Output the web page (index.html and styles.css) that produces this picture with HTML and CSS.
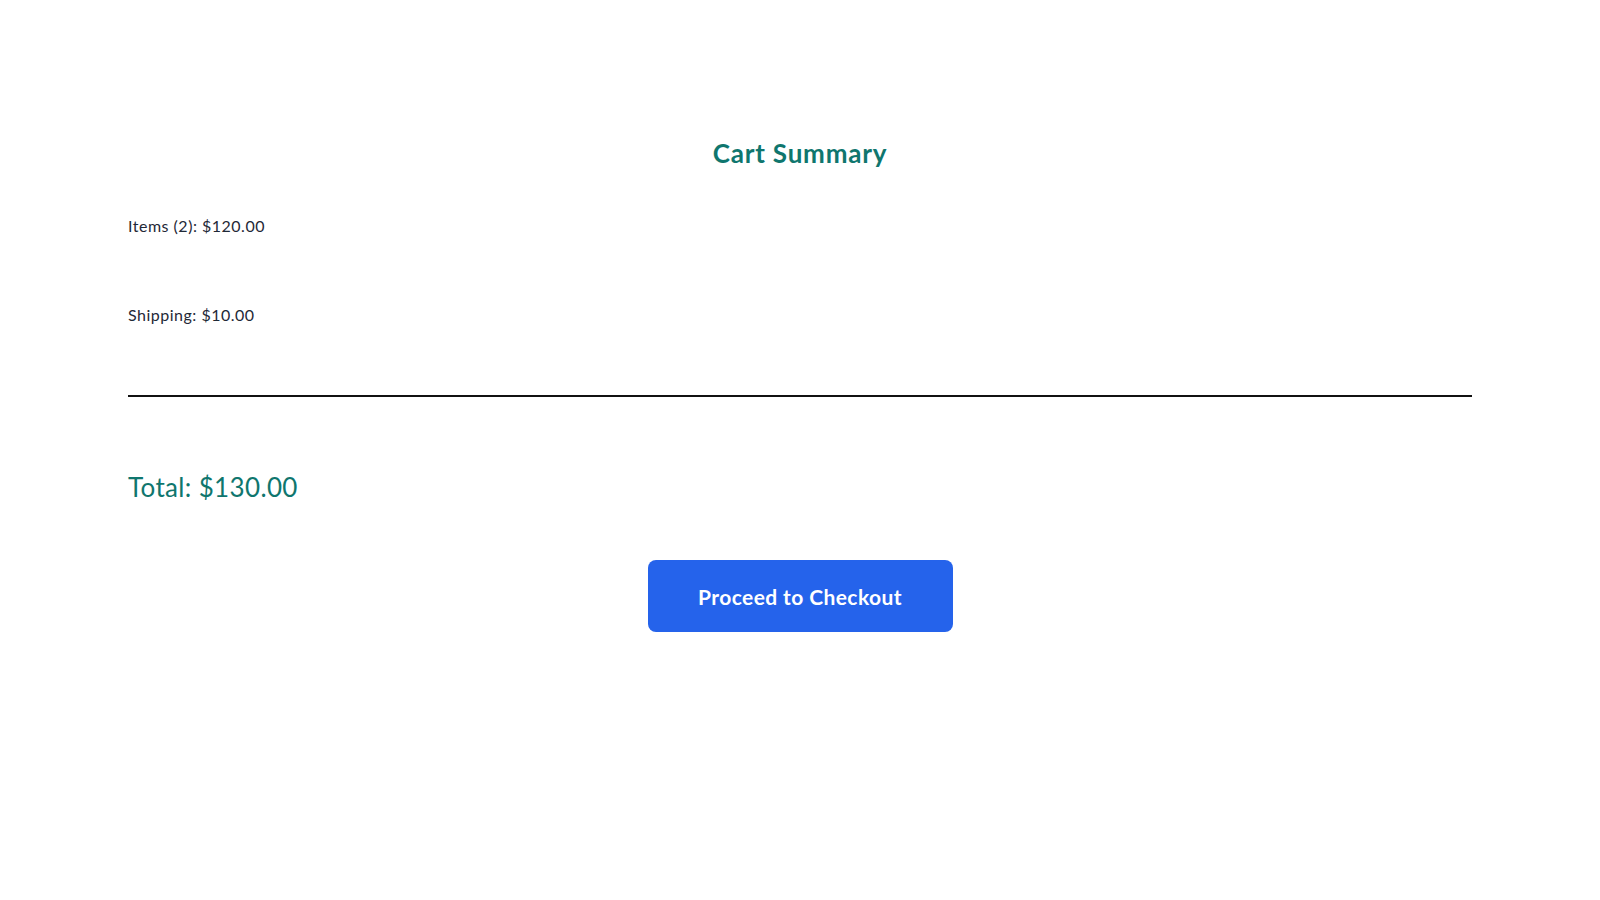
FILE: index.html
```
<!DOCTYPE html>
<html lang="en">
<head>
<meta charset="utf-8" />
<title>Cart Summary</title>
<link rel="stylesheet" href="styles.css">
</head>
<body>
<div class="cart-summary">
	<h2 class="cart-title">Cart Summary</h2>
	<p class="cart-row items">Items (2): $120.00</p>
	<p class="cart-row shipping">Shipping: $10.00</p>
	<hr class="cart-divider" />
	<p class="cart-total">Total: $130.00</p>
	<div class="cart-actions">
		<button class="checkout-btn" type="button">Proceed to Checkout</button>
	</div>
</div>
</body>
</html>
```

FILE: styles.css
```
body{margin:0; background:#fff; font-family:Lato, "Noto Sans", sans-serif; color:#1f2937}
.cart-summary{padding:137px 128px 0}
.cart-title{margin:0; font-size:26px; line-height:32px; font-weight:700; letter-spacing:0.8px; color:#0f766e; text-align:center}
.cart-row{margin:0; font-size:16px; line-height:24px; letter-spacing:0.5px}
.cart-row.items{margin-top:45px}
.cart-row.shipping{margin-top:65px}
.cart-divider{margin:68px 0 0; border:0; border-top:2px solid #111; height:0}
.cart-total{margin:74px 0 0; font-size:26px; line-height:32px; letter-spacing:0.35px; color:#0f766e}
.cart-actions{display:flex; justify-content:center; margin-top:57px}
.checkout-btn{width:305px; height:72px; border:0; border-radius:8px; background:#2563eb; color:#fff;
font-family:inherit; font-size:21px; font-weight:700; letter-spacing:0.4px; cursor:pointer}
```
